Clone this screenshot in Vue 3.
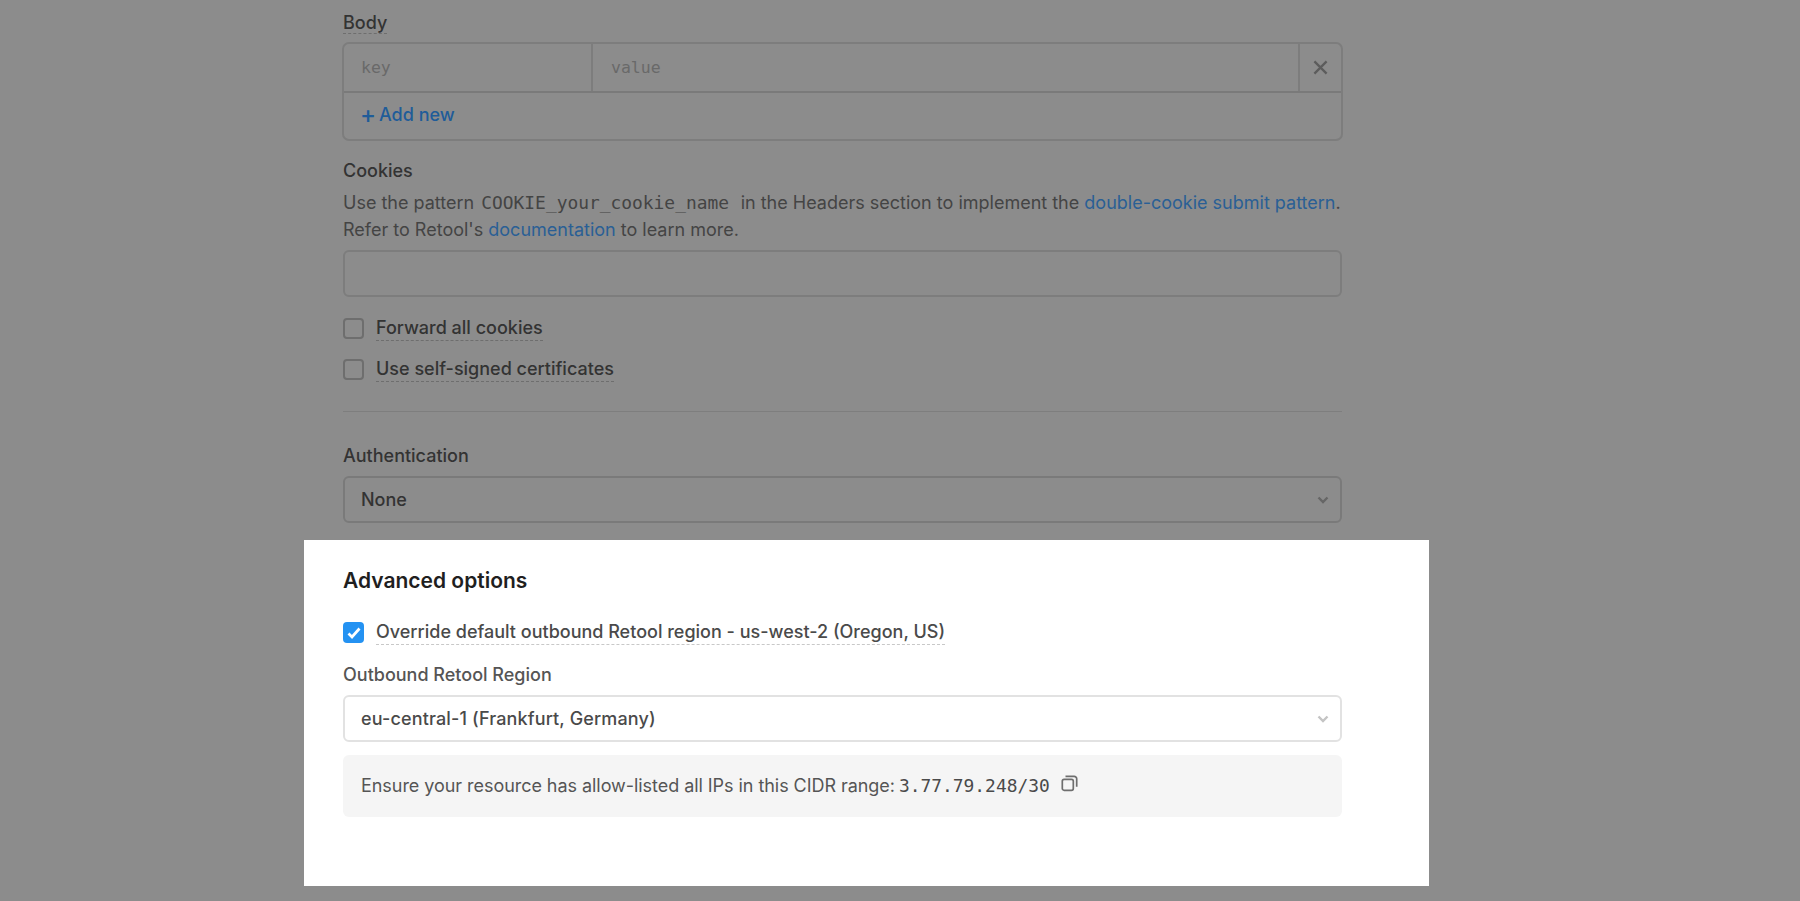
<script setup>
</script>

<template>
  <div class="page">
    <div class="form">
      <div class="label body-label"><span class="dashed">Body</span></div>
      <div class="kv">
        <div class="kv-row">
          <div class="cell key">key</div>
          <div class="cell value">value</div>
          <div class="cell close">
            <svg width="15" height="15" viewBox="0 0 16 16"><path d="M1.5 1.5l13 13M14.5 1.5l-13 13" stroke="#5c5c5c" stroke-width="2.4" fill="none"/></svg>
          </div>
        </div>
        <div class="add"><span class="plus">+</span>Add new</div>
      </div>

      <div class="label cookies-label">Cookies</div>
      <p class="help">Use the pattern <code>COOKIE_your_cookie_name</code>&nbsp; in the Headers section to implement the <a>double-cookie submit pattern</a>.<br>Refer to Retool's <a>documentation</a> to learn more.</p>
      <div class="input"></div>

      <div class="check first"><span class="box"></span><span class="dashed check-text">Forward all cookies</span></div>
      <div class="check second"><span class="box"></span><span class="dashed check-text">Use self-signed certificates</span></div>
      <div class="rule"></div>

      <div class="label auth-label">Authentication</div>
      <div class="select dim-select">
        <span>None</span>
        <svg width="12" height="8" viewBox="0 0 12 8"><path d="M1.5 1.5L6 6l4.5-4.5" stroke="#666" stroke-width="2.4" fill="none"/></svg>
      </div>
    </div>

    <section class="panel">
      <h2>Advanced options</h2>
      <div class="check-on">
        <span class="box-on">
          <svg width="14" height="12" viewBox="0 0 14 12"><path d="M1.5 6.5L5 10l7.5-8.5" stroke="#fff" stroke-width="2.7" fill="none"/></svg>
        </span>
        <span class="dashed-light">Override default outbound Retool region - us-west-2 (Oregon, US)</span>
      </div>
      <div class="region-label">Outbound Retool Region</div>
      <div class="select light-select">
        <span>eu-central-1 (Frankfurt, Germany)</span>
        <svg width="12" height="8" viewBox="0 0 12 8"><path d="M1.5 1.5L6 6l4.5-4.5" stroke="#c4c4c4" stroke-width="2.4" fill="none"/></svg>
      </div>
      <div class="note">
        <span class="note-text">Ensure your resource has allow-listed all IPs in this CIDR range:</span>
        <code>3.77.79.248/30</code>
        <svg class="copy" width="17" height="17" viewBox="0 0 17 17" fill="none" stroke="#6e6e6e" stroke-width="1.7">
          <rect x="1.3" y="4.3" width="11" height="11" rx="1.8"/>
          <path d="M4.5 1.3h8.7a2.5 2.5 0 0 1 2.5 2.5v8"/>
        </svg>
      </div>
    </section>
  </div>
</template>

<style>
html, body { margin: 0; background: #8c8c8c; }
</style>

<style scoped>
.page {
  height: 901px;
  overflow: hidden;
  background: #8c8c8c;
  font-family: Inter, "Liberation Sans", sans-serif;
  font-size: 18px;
  color: #434343;
  -webkit-font-smoothing: antialiased;
}
code { font-family: "DejaVu Sans Mono", "Liberation Mono", monospace; font-size: 17.9px; }
a { color: #2a5f95; }
.form { width: 999px; margin-left: 343px; height: 540px; }
.label { font-weight: 500; color: #333; line-height: 24px; }
.body-label { padding-top: 11px; height: 31px; }
.dashed { border-bottom: 1px dashed #6e6e6e; }
.kv {
  width: 1001px;
  margin-left: -1px;
  height: 99px;
  box-sizing: border-box;
  border: 2px solid #7d7d7d;
  border-radius: 7px;
}
.kv-row { display: flex; height: 49px; border-bottom: 2px solid #7a7a7a; box-sizing: border-box; }
.cell { display: flex; align-items: center; font-family: "DejaVu Sans Mono", monospace; font-size: 16.5px; color: #696969; }
.key { width: 249px; padding-left: 17px; box-sizing: border-box; border-right: 2px solid #7d7d7d; }
.value { flex: 1; padding-left: 18px; }
.close { width: 43px; justify-content: center; border-left: 2px solid #7d7d7d; box-sizing: border-box; }
.add { padding: 10px 0 0 16px; color: #1f5c99; font-weight: 500; line-height: 24px; display: flex; align-items: center; }
.plus { font-size: 24px; font-weight: 500; width: 19px; }
.cookies-label { margin-top: 18px; }
.help { margin: 6px 0 0; line-height: 27px; color: #444; }
.help code { margin: 0 1.5px 0 2px; }
.input { height: 47px; margin-top: 7px; box-sizing: border-box; border: 2px solid #7d7d7d; border-radius: 6px; }
.check { display: flex; align-items: center; gap: 12px; font-weight: 500; color: #333; line-height: 24px; }
.first { margin-top: 19px; }
.second { margin-top: 16px; }
.box { width: 21px; height: 21px; box-sizing: border-box; border: 2px solid #6e6e6e; border-radius: 4px; }
.rule { height: 1px; background: #7e7e7e; margin-top: 29px; }
.auth-label { margin-top: 32px; }
.select {
  display: flex;
  align-items: center;
  justify-content: space-between;
  height: 47px;
  box-sizing: border-box;
  padding: 0 11px 0 16px;
  border-radius: 6px;
  font-weight: 500;
}
.dim-select { margin-top: 8px; border: 2px solid #7a7a7a; color: #333; }
.panel {
  width: 1125px;
  height: 346px;
  box-sizing: border-box;
  margin-left: 304px;
  padding: 27px 87px 0 39px;
  background: #fff;
}
h2 { margin: 0; font-size: 21px; line-height: 28px; font-weight: 600; color: #1f1f1f; }
.check-on { display: flex; align-items: center; gap: 12px; margin-top: 25px; font-weight: 500; color: #4a4a4a; line-height: 24px; }
.box-on { width: 21px; height: 21px; border-radius: 4px; background: #2492f2; display: flex; align-items: center; justify-content: center; }
.dashed-light { border-bottom: 1px dashed #c8c8c8; }
.region-label { margin-top: 18px; font-weight: 500; color: #555; line-height: 24px; }
.light-select { margin-top: 8px; border: 2px solid #e2e2e2; color: #4a4a4a; letter-spacing: 0.14px; }
.note {
  margin-top: 13px;
  height: 62px;
  box-sizing: border-box;
  padding: 0 18px 2px;
  border-radius: 6px;
  background: #f5f5f5;
  display: flex;
  align-items: center;
  gap: 4px;
  color: #555;
  font-weight: 400;
}
.note-text { letter-spacing: -0.05px; }
.note code { color: #4a4a4a; }
.copy { margin: -4px 0 0 7px; }
</style>
